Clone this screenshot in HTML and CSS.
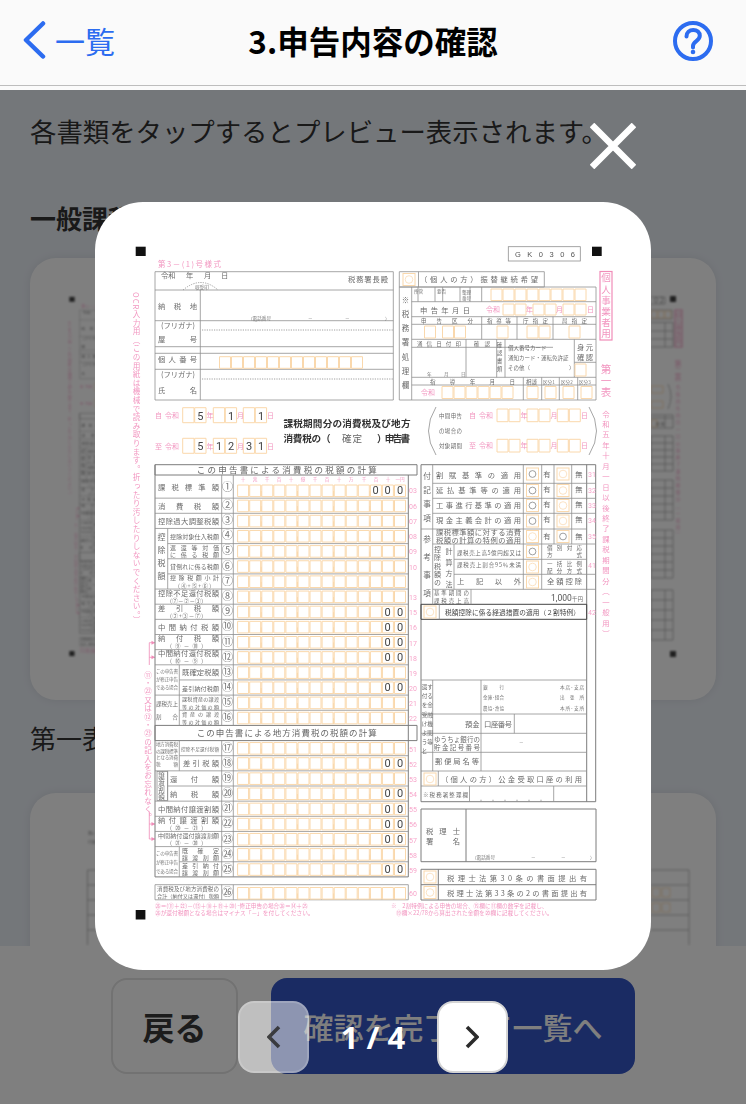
FILE: index.html
```html
<!DOCTYPE html>
<html lang="ja">
<head>
<meta charset="utf-8">
<title>3.申告内容の確認</title>
<link rel="stylesheet" href="styles.css">
</head>
<body>
<div class="app">
  <header class="top">
    <div class="top-bar">
      <a class="back">
        <svg class="back-ico" viewBox="0 0 24 38"><path d="M21 2.500 4 19l17 16.500"/></svg>
        <span>一覧</span>
      </a>
      <h1 class="title">3.申告内容の確認</h1>
      <a class="help">
        <svg class="help-ico" viewBox="0 0 40 40"><circle cx="20" cy="20" r="18"/><path d="M13.500 15.500c0-4 3-6.500 6.700-6.500 3.900 0 6.600 2.400 6.600 5.800 0 5.300-6.800 5.200-6.800 10.200v1.500"/><circle class="dot" cx="20" cy="31" r="2.300"/></svg>
      </a>
    </div>
  </header>

  <main class="content">
    <p class="lead">各書類をタップするとプレビュー表示されます。</p>
    <h2 class="group">一般課税</h2>
    <div class="card card-a">
      <svg class="card-svg" viewBox="30 258 686 442" width="686" height="442">
        <use href="#form" transform="translate(-3.130 165.100) scale(.534)"/>
        <rect class="mk" x="670" y="296" width="6" height="6"/>
        <path class="ln" d="M651 297h14v7h-14M651 310h21v9h-21M651 322.500h22v24.500h-22M651 331h22M651 339h22M665 322.500v24.500M651 415h22v13h-22M651 418h22M665 415v13"/>
        <path class="cl" d="M651 311h6v7h-6zM658 311h6v7h-6zM665 311h6v7h-6zM651 386h12v7h-12zM651 401h12v7h-12zM651 420h6v7h-6z"/>
        <text class="t" x="654" y="303">0 2</text>
        <text class="d d-small" x="660" y="426">0 0</text>
        <rect class="pb" x="675" y="310" width="7" height="37"/>
        <text class="pv pv-a" x="678.500" y="312">個人事業者用</text>
        <text class="pv pv-b" x="678" y="360">第二表</text>
        <text class="pv pv-c" x="678" y="385">令和四年四月一日以後終了課税期間分（一般用）</text>
        <path class="ln" d="M668 384q6 12 0 25"/>
        <path class="ln" d="M651 436h22v35h-22zM651 443h22M651 450h22M651 457h22M651 464h22M665 436v35M651 480h22v40h-22zM651 488h22M651 496h22M651 504h22M651 512h22M665 480v40M651 530h22v48h-22zM651 538h22M651 546h22M651 554h22M651 562h22M651 570h22M665 530v48M651 590h22v50h-22zM651 600h22M651 610h22M651 620h22M651 630h22M665 590v50"/>
        <rect class="mk" x="670" y="651" width="6" height="6"/>
      </svg>
    </div>
    <h2 class="group group-plain">第一表</h2>
    <div class="card card-b">
      <svg class="card-svg" viewBox="30 793 686 310" width="686" height="310">
        <text class="t t-tiny" x="88" y="835">第3</text>
        <text class="t t-tiny" x="88" y="844">付表</text>
        <path class="ln" d="M87.500 870H130M87.500 870V945M87.500 885H130M87.500 900H130M87.500 915H130M87.500 930H130"/>
        <path class="ln" d="M651 870h38M651 885h38M651 900h38M651 915h38M651 930h38M689 870v75"/>
        <path class="cl" d="M652 888h8v9h-8zM662 888h8v9h-8zM652 903h8v9h-8zM662 903h8v9h-8z"/>
      </svg>
    </div>
  </main>

  <footer class="foot">
    <button class="btn btn-back">戻る</button>
    <button class="btn btn-next">確認を完了して一覧へ</button>
  </footer>

  <div class="scrim">
    <button class="close">
      <svg class="close-ico" viewBox="0 0 46 46"><path d="M2 2 44 44M44 2 2 44"/></svg>
    </button>
    <section class="modal">
      <svg class="form" viewBox="95 202 556 768" width="556" height="768">
        <defs>
          <path id="r14" class="cl" d="M237.600 2h11v11.600h-11zM249.700 2h11v11.600h-11zM261.800 2h11v11.600h-11zM273.800 2h11v11.600h-11zM285.900 2h11v11.600h-11zM298 2h11v11.600h-11zM310 2h11v11.600h-11zM322.100 2h11v11.600h-11zM334.200 2h11v11.600h-11zM346.200 2h11v11.600h-11zM358.300 2h11v11.600h-11zM370.400 2h11v11.600h-11zM382.400 2h11v11.600h-11zM394.500 2h11v11.600h-11zM261.200 8v6M297.400 8v6M333.600 8v6M369.800 8v6"/>
          <g id="cb"><rect class="cl" width="12" height="12"/><circle class="cc" cx="6" cy="6" r="3.800"/></g>
          <g id="cg"><rect class="cl" width="12" height="12"/><circle class="cgc" cx="6" cy="6" r="3.400"/></g>
        </defs>
        <g id="form" class="formg">
          <!-- markers and top -->
          <rect class="mk" x="135.700" y="246.700" width="10" height="9.300"/>
          <rect class="mk" x="592" y="246.700" width="9.700" height="9.300"/>
          <rect class="mk" x="135.700" y="910" width="9.700" height="9.500"/>
          <rect class="ln" x="508.300" y="246.700" width="72" height="14.300"/>
          <text class="t gk" x="515" y="257" textLength="60">GK0306</text>
          <text class="p p-form" x="158" y="267" textLength="63">第3－(1)号様式</text>

          <!-- left vertical notices -->
          <text class="pv pv-ocr" x="136.500" y="292">OCR入力用（この用紙は機械で読み取ります。折ったり汚したりしないでください。）</text>
          <text class="pv pv-rem" x="148" y="671">⑪・㉒又は⑫・㉓の記入をお忘れなく。</text>
          <path class="pl" d="M155 642.700h-5.700V665M155 657.300h-5.700M149.300 811.700V839H155M149.300 824H155"/>
          <path class="pa" d="M151.500 640.700l3.500 2-3.500 2zM151.500 655.300l3.500 2-3.500 2zM151.500 822l3.500 2-3.500 2zM151.500 837l3.500 2-3.500 2z"/>

          <!-- top left table -->
          <path class="ln" d="M155 271.700h238.300v128.300H155zM155 290h238.300M155 320.700h238.300M155 346.700h238.300M155 353.300h238.300M155 369.300h238.300M200.300 290v110"/>
          <path class="dt" d="M202 330h191M202 379h191"/>
          <path class="dt" d="M183 290q18-15 35 0"/>
          <text class="t" x="161" y="278">令和</text><text class="t" x="186" y="278">年</text><text class="t" x="204" y="278">月</text><text class="t" x="221" y="278">日</text>
          <text class="t" x="348" y="282" textLength="40">税務署長殿</text>
          <text class="s" x="195" y="289">収受印</text>
          <text class="t" x="158" y="309" textLength="39">納税地</text>
          <text class="s" x="248" y="320">（電話番号</text><text class="s" x="308" y="320">－</text><text class="s" x="345" y="320">－</text><text class="s" x="385" y="320">）</text>
          <text class="t" x="161" y="328" textLength="34">(フリガナ)</text>
          <text class="t" x="158" y="342" textLength="39">屋　号</text>
          <text class="t" x="158" y="362" textLength="39">個人番号</text>
          <text class="t" x="161" y="377" textLength="34">(フリガナ)</text>
          <text class="t" x="158" y="393" textLength="39">氏　名</text>
          <path class="cl" d="M219.500 356.700h11v11.600h-11zM231.500 356.700h11v11.600h-11zM243.500 356.700h11v11.600h-11zM255.500 356.700h11v11.600h-11zM267.500 356.700h11v11.600h-11zM279.500 356.700h11v11.600h-11zM291.500 356.700h11v11.600h-11zM303.500 356.700h11v11.600h-11zM315.500 356.700h11v11.600h-11zM327.500 356.700h11v11.600h-11zM339.500 356.700h11v11.600h-11zM351.500 356.700h11v11.600h-11z"/>

          <!-- tax period -->
          <text class="p" x="155" y="418" textLength="5">自</text><text class="p" x="165" y="418">令和</text>
          <text class="p" x="155" y="449" textLength="5">至</text><text class="p" x="165" y="449">令和</text>
          <path class="cl" d="M182.700 407.700h11.300v15h-11.300zM194.700 407.700h11.300v15h-11.300zM213.300 407.700h11.300v15h-11.300zM225.300 407.700h11.300v15h-11.300zM243.300 407.700h11.300v15h-11.300zM255.300 407.700h11.300v15h-11.300zM182.700 438.300h11.300v15h-11.300zM194.700 438.300h11.300v15h-11.300zM213.300 438.300h11.300v15h-11.300zM225.300 438.300h11.300v15h-11.300zM243.300 438.300h11.300v15h-11.300zM255.300 438.300h11.300v15h-11.300z"/>
          <text class="p" x="206.500" y="418">年</text><text class="p" x="237" y="418">月</text><text class="p" x="267" y="418">日</text>
          <text class="p" x="206.500" y="449">年</text><text class="p" x="237" y="449">月</text><text class="p" x="267" y="449">日</text>
          <text class="d" x="200.300" y="419.500">5</text><text class="d" x="231" y="419.500">1</text><text class="d" x="261" y="419.500">1</text>
          <text class="d" x="200.300" y="450">5</text><text class="d" x="219" y="450">1</text><text class="d" x="231" y="450">2</text><text class="d" x="249" y="450">3</text><text class="d" x="261" y="450">1</text>
          <text class="h" x="283.500" y="426.500" textLength="127">課税期間分の消費税及び地方</text>
          <text class="h" x="283.500" y="441.500" textLength="47">消費税の（</text>
          <text class="h2" x="342" y="442" textLength="20">確定</text>
          <text class="h" x="377" y="441.500" textLength="33">）申告書</text>

          <!-- interim period -->
          <path class="ln" d="M436 407q-15 24 0 48M589 407q15 24 0 48"/>
          <text class="s2" x="439" y="418" textLength="23">中間申告</text><text class="s2" x="439" y="433" textLength="23">の場合の</text><text class="s2" x="439" y="448" textLength="23">対象期間</text>
          <text class="p" x="469" y="418" textLength="5">自</text><text class="p" x="479" y="418">令和</text>
          <text class="p" x="469" y="448" textLength="5">至</text><text class="p" x="479" y="448">令和</text>
          <path class="cl" d="M497 409h11v12.700h-11zM509 409h11v12.700h-11zM527 409h11v12.700h-11zM539 409h11v12.700h-11zM557.300 409h11v12.700h-11zM569.300 409h11v12.700h-11zM497 439.300h11v12.700h-11zM509 439.300h11v12.700h-11zM527 439.300h11v12.700h-11zM539 439.300h11v12.700h-11zM557.300 439.300h11v12.700h-11zM569.300 439.300h11v12.700h-11z"/>
          <text class="p" x="520.500" y="418">年</text><text class="p" x="550.500" y="418">月</text><text class="p" x="581" y="418">日</text>
          <text class="p" x="520.500" y="448">年</text><text class="p" x="550.500" y="448">月</text><text class="p" x="581" y="448">日</text>

          <!-- top right table -->
          <path class="ln" d="M399.300 271.700H544.300V287H399.300zM418.500 271.700V287M399.300 287H596V400H399.300zM411.700 287V400M411.700 301.700H596M411.700 316.700H596M411.700 324.300H596M411.700 339.300H596M411.700 347.300H553M411.700 377.300H596M411.700 385H596M418 287v14.700M435 287v14.700M442.700 287v14.700M460 287v14.700M470 287v14.700M481.700 287v14.700M481.700 316.700v22.600M517 316.700v22.600M553 316.700v22.600M466 339.300v38M496.700 339.300v38M505 339.300v38M574.300 339.300v38M574.300 362.300H596M523.300 377.300V400M541.700 377.300V400M559.300 377.300V400M577.700 377.300V400"/>
          <use href="#cb" x="403" y="273.500"/>
          <text class="t" x="420" y="282" textLength="118">（個人の方）振替継続希望</text>
          <text class="tv tv-mark" x="405.500" y="296">※税務署処理欄</text>
          <text class="s" x="414" y="293">所管</text><text class="s" x="437" y="293">要否</text><text class="s" x="462" y="294">整理</text><text class="s" x="462" y="300">番号</text>
          <path class="cl" d="M491 289h11v11.500h-11zM503 289h11v11.500h-11zM515 289h11v11.500h-11zM527 289h11v11.500h-11zM539 289h11v11.500h-11zM551 289h11v11.500h-11zM563 289h11v11.500h-11zM575 289h11v11.500h-11zM503 304h11v11h-11zM515 304h11v11h-11zM533 304h11v11h-11zM545 304h11v11h-11zM563 304h11v11h-11zM575 304h11v11h-11zM424.500 326h11v12h-11zM442.500 326h11v12h-11zM454.500 326h11v12h-11zM497 326h11v12h-11zM527 326h11v12h-11zM539 326h11v12h-11zM569 326h11v12h-11zM575 364h11v12h-11zM442 386.500h11v12h-11zM454 386.500h11v12h-11zM466 386.500h11v12h-11zM478 386.500h11v12h-11zM490 386.500h11v12h-11zM502 386.500h11v12h-11zM527 386.500h11v12h-11zM545 386.500h11v12h-11zM563 386.500h11v12h-11zM581 386.500h11v12h-11z"/>
          <text class="t" x="420" y="312.500" textLength="50">申告年月日</text>
          <text class="p" x="486" y="312">令和</text><text class="p" x="526" y="312">年</text><text class="p" x="556" y="312">月</text><text class="p" x="587" y="312">日</text>
          <text class="s2" x="421" y="322.500" textLength="52">申告区分</text><text class="s2" x="487" y="322.500" textLength="24">指導等</text><text class="s2" x="523" y="322.500" textLength="25">庁指定</text><text class="s2" x="562" y="322.500" textLength="25">局指定</text>
          <text class="s2" x="417" y="346" textLength="44">通信日付印</text><text class="s2" x="474" y="346" textLength="16">確認</text>
          <text class="tv tv-doc" x="499.500" y="342">確認書類</text>
          <text class="s2" x="508" y="350">個人番号カード</text><text class="s2" x="508" y="360">通知カード・運転免許証</text><text class="s2" x="508" y="370">その他（</text><text class="s2" x="569" y="370">）</text>
          <text class="s" x="427" y="376">年</text><text class="s" x="444" y="376">月</text><text class="s" x="461" y="376">日</text>
          <text class="t" x="577" y="350" textLength="16">身元</text><text class="t" x="577" y="360" textLength="16">確認</text>
          <text class="s2" x="430" y="384" textLength="85">指導年月日</text>
          <text class="s2" x="526" y="384">相談</text><text class="s" x="543" y="384">区分1</text><text class="s" x="561" y="384">区分2</text><text class="s" x="579" y="384">区分3</text>
          <text class="p" x="421" y="395">令和</text>
          <rect class="pb" x="600" y="271.500" width="12" height="68.500"/>
          <text class="pv pv-biz" x="606" y="273">個人事業者用</text>
          <text class="pv pv-one" x="606" y="364">第一表</text>
          <text class="pv pv-era" x="606" y="410">令和五年十月一日以後終了課税期間分（一般用）</text>

          <!-- main table frame -->
          <path class="ln2" d="M155 464.700h262V475H155zM155 464.700V876.900H408.300V475M155 725.400h262v15.200H155z"/>
          <text class="tt" x="196.700" y="473.300" textLength="180">この申告書による消費税の税額の計算</text>
          <text class="tt" x="196.700" y="736.300" textLength="180">この申告書による地方消費税の税額の計算</text>
          <path class="ln" d="M221.700 475V725.400M233.300 475V725.400M221.700 740.600V876.900M233.300 740.600V876.900M155 498.150H408.300M155 513.300H408.300M155 528.450H408.300M167.700 543.600H408.300M167.700 558.750H408.300M167.700 573.900H408.300M155 589.050H408.300M155 604.200H408.300M155 619.350H408.300M155 634.500H408.300M155 649.650H408.300M155 664.800H408.300M179.300 679.950H408.300M155 695.100H408.300M179.300 710.250H408.300M179.300 755.700H408.300M155 770.850H408.300M167.700 786H408.300M155 801.150H408.300M155 816.300H408.300M155 831.450H408.300M155 846.600H408.300M179.300 861.750H408.300M167.700 528.450V589.050M179.300 664.800V725.400M179.300 740.600V770.850M167.700 770.850V801.150M179.300 846.600V876.900M155 884.700H408.300V899.800H155zM221.700 884.700V899.800M233.300 884.700V899.800"/>
          <g class="tick">
            <text x="243" y="480.500">十</text><text x="255" y="480.500">兆</text><text x="267" y="480.500">千</text><text x="279" y="480.500">百</text><text x="291" y="480.500">十</text><text x="303" y="480.500">億</text><text x="315" y="480.500">千</text><text x="327" y="480.500">百</text><text x="339" y="480.500">十</text><text x="351" y="480.500">万</text><text x="364" y="480.500">千</text><text x="376" y="480.500">百</text><text x="388" y="480.500">十</text><text x="400" y="480.500">一円</text>
          </g>
          <!-- cell rows -->
          <use href="#r14" y="483"/><use href="#r14" y="498.150"/><use href="#r14" y="513.300"/><use href="#r14" y="528.450"/><use href="#r14" y="543.600"/><use href="#r14" y="558.750"/><use href="#r14" y="573.900"/><use href="#r14" y="589.050"/><use href="#r14" y="604.200"/><use href="#r14" y="619.350"/><use href="#r14" y="634.500"/><use href="#r14" y="649.650"/><use href="#r14" y="664.800"/><use href="#r14" y="679.950"/><use href="#r14" y="695.100"/><use href="#r14" y="710.250"/>
          <use href="#r14" y="740.550"/><use href="#r14" y="755.700"/><use href="#r14" y="770.850"/><use href="#r14" y="786"/><use href="#r14" y="801.150"/><use href="#r14" y="816.300"/><use href="#r14" y="831.450"/><use href="#r14" y="846.600"/><use href="#r14" y="861.750"/><use href="#r14" y="885.500"/>
          <!-- circled numbers -->
          <g class="cn">
            <text x="227.500" y="491">①</text><text x="227.500" y="509">②</text><text x="227.500" y="524">③</text><text x="227.500" y="539">④</text><text x="227.500" y="554">⑤</text><text x="227.500" y="569.500">⑥</text><text x="227.500" y="585">⑦</text><text x="227.500" y="600">⑧</text><text x="227.500" y="615">⑨</text><text x="227.500" y="630">⑩</text><text x="227.500" y="645.500">⑪</text><text x="227.500" y="660.500">⑫</text><text x="227.500" y="675.500">⑬</text><text x="227.500" y="691">⑭</text><text x="227.500" y="706">⑮</text><text x="227.500" y="721">⑯</text>
            <text x="227.500" y="751.500">⑰</text><text x="227.500" y="766.500">⑱</text><text x="227.500" y="781.500">⑲</text><text x="227.500" y="797">⑳</text><text x="227.500" y="812">㉑</text><text x="227.500" y="827">㉒</text><text x="227.500" y="842.500">㉓</text><text x="227.500" y="857.500">㉔</text><text x="227.500" y="872.500">㉕</text><text x="227.500" y="895.500">㉖</text>
          </g>
          <!-- codes -->
          <g class="code">
            <text x="409" y="493">03</text><text x="409" y="509">06</text><text x="409" y="524">07</text><text x="409" y="539">08</text><text x="409" y="554">09</text><text x="409" y="569.500">10</text><text x="409" y="600">13</text><text x="409" y="615">15</text><text x="409" y="630">16</text><text x="409" y="645.500">17</text><text x="409" y="660.500">18</text><text x="409" y="675.500">19</text><text x="409" y="691">20</text><text x="409" y="706">21</text><text x="409" y="721">22</text>
            <text x="409" y="751.500">51</text><text x="409" y="766.500">52</text><text x="409" y="781.500">53</text><text x="409" y="797">54</text><text x="409" y="812">55</text><text x="409" y="827">56</text><text x="409" y="842.500">57</text><text x="409" y="857.500">58</text><text x="409" y="872.500">59</text><text x="409" y="895.500">60</text>
          </g>
          <!-- entered digits -->
          <text class="d" x="375.700" y="494.300">0</text><text class="d" x="387.700" y="494.300">0</text><text class="d" x="400" y="494.300">0</text>
          <text class="d" x="387.700" y="615.500">0</text><text class="d" x="400" y="615.500">0</text>
          <text class="d" x="387.700" y="630.700">0</text><text class="d" x="400" y="630.700">0</text>
          <text class="d" x="387.700" y="645.800">0</text><text class="d" x="400" y="645.800">0</text>
          <text class="d" x="387.700" y="661">0</text><text class="d" x="400" y="661">0</text>
          <text class="d" x="387.700" y="691.300">0</text><text class="d" x="400" y="691.300">0</text>
          <text class="d" x="387.700" y="767">0</text><text class="d" x="400" y="767">0</text>
          <text class="d" x="387.700" y="797.300">0</text><text class="d" x="400" y="797.300">0</text>
          <text class="d" x="387.700" y="812.500">0</text><text class="d" x="400" y="812.500">0</text>
          <text class="d" x="387.700" y="827.700">0</text><text class="d" x="400" y="827.700">0</text>
          <text class="d" x="387.700" y="842.800">0</text><text class="d" x="400" y="842.800">0</text>
          <text class="d" x="387.700" y="873">0</text><text class="d" x="400" y="873">0</text>

          <!-- main labels -->
          <text class="t" x="158" y="490" textLength="61">課税標準額</text>
          <text class="t" x="158" y="508.500" textLength="61">消費税額</text>
          <text class="t" x="158" y="523.700" textLength="61">控除過大調整税額</text>
          <text class="t t-6" x="170" y="538.800" textLength="49">控除対象仕入税額</text>
          <text class="t t-6" x="170" y="550" textLength="49">返還等対価</text><text class="t t-6" x="170" y="557" textLength="49">に係る税額</text>
          <text class="t t-6" x="170" y="569" textLength="49">貸倒れに係る税額</text>
          <text class="t t-6" x="170" y="580" textLength="49">控除税額小計</text><text class="s2" x="178" y="587.500" textLength="33">(④+⑤+⑥)</text>
          <text class="tv tv-ded" x="161.500" y="533">控除税額</text>
          <text class="t" x="158" y="595.500" textLength="61">控除不足還付税額</text><text class="s2" x="170" y="602.500" textLength="33">(⑦－②－③)</text>
          <text class="t" x="158" y="610.500" textLength="61">差　引　税　額</text><text class="s2" x="170" y="617.700" textLength="33">(②+③－⑦)</text>
          <text class="t" x="158" y="629.700" textLength="61">中間納付税額</text>
          <text class="t" x="158" y="641" textLength="61">納　付　税　額</text><text class="s2" x="170" y="648" textLength="33">( ⑨ － ⑩ )</text>
          <text class="t" x="158" y="656" textLength="61">中間納付還付税額</text><text class="s2" x="170" y="663" textLength="33">( ⑩ － ⑨ )</text>
          <text class="s" x="156" y="673" textLength="22">この申告書</text><text class="s" x="156" y="681" textLength="22">が修正申告</text><text class="s" x="156" y="689" textLength="22">である場合</text>
          <text class="t" x="182" y="675" textLength="37">既確定税額</text>
          <text class="t t-6" x="182" y="690.500" textLength="37">差引納付税額</text>
          <text class="s2" x="156" y="706" textLength="22">課税売上</text><text class="s2" x="156" y="719" textLength="22">割　合</text>
          <text class="s3" x="182" y="701" textLength="37">課税資産の譲渡</text><text class="s3" x="182" y="708.500" textLength="37">等の対価の額</text>
          <text class="s3" x="182" y="716" textLength="37">資産の譲渡</text><text class="s3" x="182" y="723.500" textLength="37">等の対価の額</text>
          <text class="s" x="156" y="746" textLength="22">地方消費税</text><text class="s" x="156" y="752.500" textLength="22">の課税標準</text><text class="s" x="156" y="759" textLength="22">となる消費</text><text class="s" x="156" y="766" textLength="22">税　額</text>
          <text class="s" x="181" y="751" textLength="38">控除不足還付税額</text>
          <text class="t" x="183" y="766" textLength="36">差引税額</text>
          <rect class="ln" x="157" y="771.500" width="10.500" height="29"/>
          <text class="tv tv-jyo" x="161.500" y="772">譲渡割額</text>
          <text class="t" x="170" y="781.500" textLength="49">還　付　額</text>
          <text class="t" x="170" y="796.500" textLength="49">納　税　額</text>
          <text class="t" x="158" y="811.500" textLength="61">中間納付譲渡割額</text>
          <text class="t" x="158" y="823" textLength="61">納付譲渡割額</text><text class="s2" x="170" y="830" textLength="33">( ⑳ － ㉑ )</text>
          <text class="t t-6" x="158" y="838" textLength="61">中間納付還付譲渡割額</text><text class="s2" x="170" y="845" textLength="33">( ㉑ － ⑳ )</text>
          <text class="s" x="156" y="855" textLength="22">この申告書</text><text class="s" x="156" y="864" textLength="22">が修正申告</text><text class="s" x="156" y="873" textLength="22">である場合</text>
          <text class="t t-6" x="182" y="852.800" textLength="37">既　確　定</text><text class="t t-6" x="182" y="860" textLength="37">譲渡割額</text>
          <text class="t t-6" x="182" y="868" textLength="37">差引納付</text><text class="t t-6" x="182" y="875.200" textLength="37">譲渡割額</text>
          <text class="s2" x="157" y="891" textLength="62">消費税及び地方消費税の</text><text class="s3" x="157" y="898" textLength="62">合計（納付又は還付）税額</text>
          <text class="fn" x="155" y="907.500">㉖＝(⑪＋㉒)－(⑬＋⑱＋⑲＋⑳)･修正申告の場合㉖＝⑭＋㉕</text>
          <text class="fn" x="155" y="914.500">㉖が還付税額となる場合はマイナス「－」を付してください。</text>
          <text class="fn" x="391" y="907.500">※　2割特例による申告の場合、⑮欄に⑪欄の数字を記載し、</text>
          <text class="fn" x="396" y="914.500">⑲欄×22/78から算出された金額を⑳欄に記載してください。</text>

          <!-- right table -->
          <path class="ln2" d="M421 464.700H595.700V801.700H421zM586.700 464.700V801.700"/>
          <path class="ln3" d="M421 604.300H586.700V619.300H421z"/>
          <path class="ln" d="M432.700 464.700V604.300M523.300 464.700V589.300M541.700 464.700V589.300M554 464.700V544M571.700 464.700V544M421 529H586.700M432.700 483.300H595.700M432.700 498.300H595.700M432.700 513.300H595.700M432.700 544H595.700M454 544V589.300M454 559.300H586.700M454 574.300H595.700M432.700 589.300H595.700M471 589.300V604.300M439.300 604.300V619.300M421 680H586.700M421 714H586.700M421 733.300H586.700M421 752.300H586.700M421 771H586.700M421 786H586.700M432.700 680V771M481 680V771M514.300 714V733.300M438.300 771V786M469.500 786V801.700M553.700 786V801.700M481 801.700v-2M493 801.700v-2M505 801.700v-2M517 801.700v-2M529 801.700v-2M541 801.700v-2"/>
          <text class="tv tv-fuki" x="427" y="472">付記事項</text>
          <text class="tv tv-san" x="427" y="535">参考事項</text>
          <text class="t" x="436" y="478" textLength="85">割賦基準の適用</text>
          <text class="t" x="436" y="493" textLength="85">延払基準等の適用</text>
          <text class="t" x="436" y="508" textLength="85">工事進行基準の適用</text>
          <text class="t" x="436" y="523" textLength="85">現金主義会計の適用</text>
          <text class="t" x="436" y="535" textLength="85">課税標準額に対する消費</text>
          <text class="t" x="436" y="542.500" textLength="85">税額の計算の特例の適用</text>
          <text class="tv tv-koj" x="437.500" y="546">控除税額の</text>
          <text class="tv tv-kei" x="449" y="548">計算方法</text>
          <text class="s2" x="457" y="555" textLength="64">課税売上高5億円超又は</text>
          <text class="s2" x="457" y="567" textLength="64">課税売上割合95％未満</text>
          <text class="t" x="457" y="584" textLength="64">上　記　以　外</text>
          <text class="t" x="547" y="476.500" text-anchor="middle">有</text><text class="t" x="547" y="491.500" text-anchor="middle">有</text><text class="t" x="547" y="506.500" text-anchor="middle">有</text><text class="t" x="547" y="521.500" text-anchor="middle">有</text><text class="t" x="547" y="539" text-anchor="middle">有</text>
          <text class="t" x="579" y="476.500" text-anchor="middle">無</text><text class="t" x="579" y="491.500" text-anchor="middle">無</text><text class="t" x="579" y="506.500" text-anchor="middle">無</text><text class="t" x="579" y="521.500" text-anchor="middle">無</text><text class="t" x="579" y="539" text-anchor="middle">無</text>
          <use href="#cg" x="526.500" y="468"/><use href="#cb" x="557" y="468"/>
          <use href="#cg" x="526.500" y="484.500"/><use href="#cb" x="557" y="484.500"/>
          <use href="#cg" x="526.500" y="499.500"/><use href="#cb" x="557" y="499.500"/>
          <use href="#cg" x="526.500" y="515"/><use href="#cb" x="557" y="515"/>
          <use href="#cb" x="526.500" y="530.500"/><use href="#cg" x="557" y="530.500"/>
          <use href="#cg" x="526.500" y="545.500"/><use href="#cb" x="526.500" y="561"/><use href="#cb" x="526.500" y="576"/>
          <use href="#cb" x="424" y="606"/><use href="#cb" x="424" y="773"/>
          <text class="s2" x="547" y="550" textLength="35">個別対応</text><text class="s2" x="547" y="557" textLength="35">方　　式</text>
          <text class="s2" x="547" y="565.500" textLength="35">一括比例</text><text class="s2" x="547" y="572.500" textLength="35">配分方式</text>
          <text class="t" x="547" y="584" textLength="35">全額控除</text>
          <text class="s2" x="434" y="595" textLength="35">基準期間の</text><text class="s2" x="434" y="602.500" textLength="35">課税売上高</text>
          <text class="amt" x="551" y="601">1,000</text><text class="s2" x="572" y="601">千円</text>
          <text class="t t-keika" x="445" y="614.700" textLength="135">税額控除に係る経過措置の適用（２割特例）</text>
          <g class="code">
            <text x="588" y="477">31</text><text x="588" y="493">32</text><text x="588" y="508">33</text><text x="588" y="523">34</text><text x="588" y="539">35</text><text x="588" y="568">41</text><text x="588" y="615">42</text>
          </g>
          <text class="tv tv-kan" x="424.500" y="684">還付を受けようと</text>
          <text class="tv tv-kan" x="430" y="684">する金融機関等</text>
          <text class="s" x="483" y="689" textLength="21">銀　行</text><text class="s" x="483" y="699" textLength="21">金庫･組合</text><text class="s" x="483" y="710" textLength="21">農協･漁協</text>
          <text class="s" x="560" y="689" textLength="24">本店･支店</text><text class="s" x="560" y="699" textLength="24">出 張 所</text><text class="s" x="560" y="710" textLength="24">本所･支所</text>
          <text class="t" x="465" y="727">預金</text>
          <text class="t" x="484" y="727" textLength="28">口座番号</text>
          <text class="t t-65" x="434" y="741.500" textLength="46">ゆうちょ銀行の</text><text class="t t-65" x="434" y="749.500" textLength="46">貯金記号番号</text>
          <text class="s" x="519" y="744">－</text>
          <text class="t" x="435" y="764" textLength="44">郵便局名等</text>
          <text class="t" x="441" y="781.500" textLength="141">（個人の方）公金受取口座の利用</text>
          <text class="s2" x="423" y="796.500" textLength="45">※税務署整理欄</text>

          <!-- tax accountant -->
          <path class="ln2" d="M421 809H596V861.700H421zM466 809V861.700M421 869.300H596V900H421zM421 884.700H596M438.300 869.300V900"/>
          <text class="t" x="426" y="834" textLength="34">税理士</text>
          <text class="t" x="426" y="844" textLength="34">署　名</text>
          <text class="s" x="472" y="859">（電話番号</text><text class="s" x="531" y="859">－</text><text class="s" x="561" y="859">－</text><text class="s" x="590" y="859">）</text>
          <use href="#cb" x="424" y="871"/><use href="#cb" x="424" y="886.500"/>
          <text class="t" x="447" y="880.500" textLength="140">税理士法第30条の書面提出有</text>
          <text class="t" x="447" y="895.700" textLength="140">税理士法第33条の2の書面提出有</text>
        </g>
      </svg>
    </section>
    <nav class="pager">
      <button class="page-btn page-prev"><svg class="chev" viewBox="0 0 14 24"><path d="M12 2 2 12l10 10"/></svg></button>
      <span class="page-no">1 / 4</span>
      <button class="page-btn page-next"><svg class="chev" viewBox="0 0 14 24"><path d="m2 2 10 10L2 22"/></svg></button>
    </nav>
  </div>
</div>
</body>
</html>
```
FILE: styles.css
```css
* { box-sizing: border-box; }
html, body { margin: 0; padding: 0; }
body { font-family: "Noto Sans CJK JP", "Noto Sans", sans-serif; background: #e9eef5; }
button { font-family: inherit; padding: 0; cursor: pointer; }

.app { position: relative; width: 746px; height: 1104px; overflow: hidden; display: flex; flex-direction: column; }

.top { flex: none; height: 90px; background: #fafafa; }
.top-bar { height: 86px; border-bottom: 1px solid #bdbdbd; padding: 0 33px; display: grid; grid-template-columns: 1fr auto 1fr; align-items: center; }
.back { display: flex; align-items: center; gap: 9px; color: #2c6cf0; font-size: 30px; line-height: 1; padding-bottom: 6px; margin-left: -11px; }
.back-ico { width: 24px; height: 38px; fill: none; stroke: #2c6cf0; stroke-width: 4.500; stroke-linecap: round; stroke-linejoin: round; }
.title { margin: 0; font-size: 31.500px; font-weight: 700; color: #000; line-height: 1; padding-bottom: 4px; }
.help { justify-self: end; display: flex; padding-bottom: 4px; }
.help-ico { width: 40px; height: 40px; fill: none; stroke: #2c6cf0; stroke-width: 4; stroke-linecap: round; }
.help-ico .dot { fill: #2c6cf0; stroke: none; }

.content { flex: 1; min-height: 0; padding: 0 30px; overflow: hidden; color: #333; }
.lead { margin: 22px 0 0; font-size: 26.400px; line-height: 38px; white-space: nowrap; }
.group { margin: 49px 0 0; font-size: 26px; line-height: 38px; font-weight: 700; }
.group-plain { margin-top: 19px; font-weight: 400; }
.card { background: #fff; border-radius: 26px; box-shadow: 0 0 10px rgba(0, 0, 0, .08); overflow: hidden; }
.card-a { height: 442px; margin-top: 21px; }
.card-b { height: 310px; margin-top: 36px; }
.card-svg { display: block; filter: blur(.9px); opacity: .8; }

.foot { position: absolute; left: 0; right: 0; bottom: 0; height: 158px; background: #fff; padding: 32px 0 0 111px; display: flex; gap: 33px; align-items: flex-start; }
.btn { height: 96px; border-radius: 16px; font-size: 32px; line-height: 1; }
.btn-back { width: 127px; background: #fff; border: 2px solid #e4e4e4; color: #383838; font-weight: 700; }
.btn-next { width: 364px; background: #3456c6; border: 0; color: #fff; font-size: 30px; font-weight: 500; }

.scrim { position: absolute; left: 0; right: 0; top: 90px; bottom: 0; background: rgba(0, 0, 0, .5); display: flex; flex-direction: column; align-items: center; }
.close { position: absolute; left: 590px; top: 33px; width: 46px; height: 46px; background: none; border: 0; }
.close-ico { display: block; width: 46px; height: 46px; fill: none; stroke: #fff; stroke-width: 6.500; }
.modal { margin-top: 112px; width: 556px; height: 768px; background: #fff; border-radius: 48px; overflow: hidden; flex: none; }
.form { display: block; filter: blur(.4px); font-family: "Noto Sans CJK JP", sans-serif; }

.pager { position: absolute; left: 238px; top: 911px; width: 270px; height: 72px; display: flex; justify-content: space-between; align-items: center; }
.page-btn { width: 71px; height: 72px; border-radius: 16px; border: 2px solid #d4d4d4; display: flex; align-items: center; justify-content: center; }
.page-prev { background: rgba(255, 255, 255, .5); border-color: rgba(255, 255, 255, .15); }
.page-next { background: #fff; }
.chev { width: 14px; height: 24px; fill: none; stroke: #2b2b2b; stroke-width: 3.600; }
.page-prev .chev { opacity: .85; }
.page-no { color: #fff; font-size: 31px; font-weight: 700; line-height: 1; font-family: "Noto Sans", sans-serif; }

/* form drawing */
.mk { fill: #111; stroke: none; }
.ln { fill: none; stroke: #8f8f8f; stroke-width: .8; }
.ln2 { fill: none; stroke: #7d7d7d; stroke-width: 1; }
.ln3 { fill: none; stroke: #444; stroke-width: 1; }
.cl { fill: none; stroke: #fad8ac; stroke-width: 1; }
.cc { fill: none; stroke: #fadcb6; stroke-width: .8; }
.cgc { fill: none; stroke: #777; stroke-width: .7; }
.dt { fill: none; stroke: #888; stroke-width: .8; stroke-dasharray: 1.200 1.200; }
.pl { fill: none; stroke: #f08cb8; stroke-width: .8; }
.pa { fill: #f08cb8; stroke: none; }
.pb { fill: none; stroke: #f08cb8; stroke-width: 1.200; }
.t { font-size: 7.300px; fill: #6b6b6b; }
.t-6 { font-size: 6px; }
.t-65 { font-size: 6.500px; }
.t-tiny { font-size: 4px; }
.t-keika { font-size: 6.700px; fill: #444; }
.s { font-size: 4.600px; fill: #777; }
.s2 { font-size: 5.500px; fill: #6b6b6b; }
.s3 { font-size: 5.100px; fill: #6b6b6b; }
.p { font-size: 7px; fill: #f296c0; }
.p-form { font-size: 7.500px; }
.pv { font-size: 7.500px; fill: #f296c0; writing-mode: vertical-rl; }
.pv-a { font-size: 5.500px; }
.pv-b { font-size: 7px; }
.pv-c { font-size: 4.600px; letter-spacing: 2.400px; }
.pv-ocr { font-size: 7.600px; letter-spacing: 1px; }
.pv-rem { font-size: 7.600px; letter-spacing: .8px; }
.pv-biz { font-size: 9.600px; letter-spacing: 1.500px; }
.pv-one { font-size: 10.500px; letter-spacing: 1px; }
.pv-era { font-size: 7.400px; letter-spacing: 3.050px; }
.tv { font-size: 7.500px; fill: #6b6b6b; writing-mode: vertical-rl; }
.tv-mark { letter-spacing: 6.800px; }
.tv-doc { font-size: 5.600px; letter-spacing: 2.400px; }
.tv-ded { font-size: 8px; letter-spacing: 5px; }
.tv-jyo { font-size: 6.500px; letter-spacing: .5px; }
.tv-fuki { font-size: 7.600px; letter-spacing: 6.500px; }
.tv-san { font-size: 7.600px; letter-spacing: 10.400px; }
.tv-koj { font-size: 7px; letter-spacing: 1.300px; }
.tv-kei { font-size: 7px; letter-spacing: 3.800px; }
.tv-kan { font-size: 5.600px; letter-spacing: 3.600px; }
.gk { font-size: 7.500px; font-family: "Liberation Sans", sans-serif; fill: #555; }
.d { font-family: Roboto, sans-serif; font-size: 11px; fill: #444; text-anchor: middle; }
.d-small { font-size: 6px; }
.h { font-size: 9.600px; font-weight: 700; fill: #333; }
.h2 { font-size: 9.600px; fill: #666; }
.tt { font-size: 8.500px; fill: #666; }
.tick text { font-size: 4.600px; fill: #f296c0; text-anchor: middle; }
.cn text { font-size: 11px; fill: #777; text-anchor: middle; }
.code text { font-family: Roboto, sans-serif; font-size: 7px; fill: #f7a6cb; }
.fn { font-size: 5.700px; fill: #f296c0; }
.amt { font-family: Roboto, sans-serif; font-size: 8.500px; fill: #555; }
```
